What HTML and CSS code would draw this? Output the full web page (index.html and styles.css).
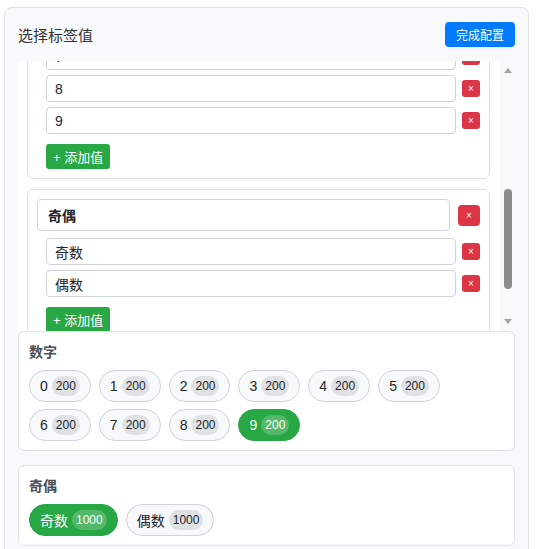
FILE: index.html
```html
<!DOCTYPE html>
<html lang="zh-CN">
<head>
    <meta charset="UTF-8">
    <meta name="viewport" content="width=device-width, initial-scale=1.0">
    <title>选择标签值</title>
    <link rel="stylesheet" href="styles.css">
</head>
<body>
    <div class="panel">
        <div class="panel-head">
            <span class="panel-title">选择标签值</span>
            <button class="btn-done">完成配置</button>
        </div>

        <!-- 标签组编辑 -->
        <div class="scroller">
            <div class="group-list" id="groupList">
                <div class="group">
                    <div class="group-head">
                        <input class="group-name" type="text" value="数字">
                        <button class="btn-del btn-del-lg">×</button>
                    </div>
                    <div class="values">
                        <div class="value-row"><input class="value-input" type="text" value="0"><button class="btn-del">×</button></div>
                        <div class="value-row"><input class="value-input" type="text" value="1"><button class="btn-del">×</button></div>
                        <div class="value-row"><input class="value-input" type="text" value="2"><button class="btn-del">×</button></div>
                        <div class="value-row"><input class="value-input" type="text" value="3"><button class="btn-del">×</button></div>
                        <div class="value-row"><input class="value-input" type="text" value="4"><button class="btn-del">×</button></div>
                        <div class="value-row"><input class="value-input" type="text" value="5"><button class="btn-del">×</button></div>
                        <div class="value-row"><input class="value-input" type="text" value="6"><button class="btn-del">×</button></div>
                        <div class="value-row"><input class="value-input" type="text" value="7"><button class="btn-del">×</button></div>
                        <div class="value-row"><input class="value-input" type="text" value="8"><button class="btn-del">×</button></div>
                        <div class="value-row"><input class="value-input" type="text" value="9"><button class="btn-del">×</button></div>
                        <button class="btn-add">+ 添加值</button>
                    </div>
                </div>
                <div class="group">
                    <div class="group-head">
                        <input class="group-name" type="text" value="奇偶">
                        <button class="btn-del btn-del-lg">×</button>
                    </div>
                    <div class="values">
                        <div class="value-row"><input class="value-input" type="text" value="奇数"><button class="btn-del">×</button></div>
                        <div class="value-row"><input class="value-input" type="text" value="偶数"><button class="btn-del">×</button></div>
                        <button class="btn-add">+ 添加值</button>
                    </div>
                </div>
                <button class="btn-add-group">+ 添加标签</button>
            </div>
            <!-- 滚动条 -->
            <div class="scrollbar">
                <span class="sb-up"></span>
                <span class="sb-thumb"></span>
                <span class="sb-down"></span>
            </div>
        </div>

        <!-- 标签值选择 -->
        <div class="tag-card">
            <div class="tag-title">数字</div>
            <div class="chips">
                <span class="chip">0 <span class="badge">200</span></span>
                <span class="chip">1 <span class="badge">200</span></span>
                <span class="chip">2 <span class="badge">200</span></span>
                <span class="chip">3 <span class="badge">200</span></span>
                <span class="chip">4 <span class="badge">200</span></span>
                <span class="chip">5 <span class="badge">200</span></span>
                <span class="chip">6 <span class="badge">200</span></span>
                <span class="chip">7 <span class="badge">200</span></span>
                <span class="chip">8 <span class="badge">200</span></span>
                <span class="chip active">9 <span class="badge">200</span></span>
            </div>
        </div>
        <div class="tag-card">
            <div class="tag-title">奇偶</div>
            <div class="chips">
                <span class="chip active">奇数 <span class="badge">1000</span></span>
                <span class="chip">偶数 <span class="badge">1000</span></span>
            </div>
        </div>
    </div>
    <script>
        var groupList = document.getElementById('groupList');
        groupList.scrollTop = 301;
    </script>
</body>
</html>
```

FILE: styles.css
```css
*{
    margin: 0;
    padding: 0;
    box-sizing: border-box;
}
body{
    font-family: "Liberation Sans", "Noto Sans CJK SC", sans-serif;
    font-size: 14px;
    color: #212529;
    background: #fff;
}
button, input{
    font-family: inherit;
}
.panel{
    margin: 7px 9px 0 4px;
    padding: 14px 13px;
    background: #f8f9fa;
    border: 1px solid #dee2e6;
    border-radius: 8px;
}
.panel-head{
    display: flex;
    align-items: center;
    justify-content: space-between;
    margin-bottom: 14px;
}
.panel-title{
    font-size: 15px;
    color: #333;
}
.btn-done{
    height: 25px;
    padding: 0 11px;
    font-size: 12px;
    color: #fff;
    background: #007bff;
    border: none;
    border-radius: 4px;
}

/* 标签组编辑区 */
.scroller{
    display: flex;
    height: 270px;
    background: #fff;
    border-radius: 4px 4px 0 0;
}
.group-list{
    flex: 1;
    min-width: 0;
    overflow: hidden;
    padding: 10px 10px 10px 9px;
}
.scrollbar{
    width: 15px;
    display: flex;
    flex-direction: column;
    align-items: center;
    background: #f9f9f9;
}
.sb-up, .sb-down{
    width: 0;
    height: 0;
    border-left: 4px solid transparent;
    border-right: 4px solid transparent;
}
.sb-up{
    margin-top: 7px;
    border-bottom: 5px solid #a3a3a3;
}
.sb-down{
    margin-top: auto;
    margin-bottom: 7px;
    border-top: 5px solid #a3a3a3;
}
.sb-thumb{
    margin-top: 116px;
    width: 8px;
    height: 100px;
    background: #8c8c8c;
    border-radius: 4px;
}
.group{
    padding: 9px;
    border: 1px solid #dee2e6;
    border-radius: 6px;
    margin-bottom: 10px;
}
.group-head{
    display: flex;
    align-items: center;
    gap: 8px;
    margin-bottom: 7px;
}
.group-name{
    flex: 1;
    min-width: 0;
    height: 32px;
    padding: 0 10px;
    font-size: 14px;
    font-weight: bold;
    color: #212529;
    border: 1px solid #ced4da;
    border-radius: 4px;
}
.values{
    padding-left: 9px;
    display: flex;
    flex-direction: column;
    align-items: flex-start;
    gap: 5px;
}
.value-row{
    display: flex;
    align-items: center;
    gap: 6px;
    width: 100%;
}
.value-input{
    flex: 1;
    min-width: 0;
    height: 27px;
    padding: 0 8px;
    font-size: 14px;
    color: #212529;
    border: 1px solid #ced4da;
    border-radius: 4px;
}
.btn-del{
    width: 18px;
    height: 17px;
    font-size: 10px;
    line-height: 17px;
    color: #fff;
    background: #dc3545;
    border: none;
    border-radius: 3px;
    text-align: center;
}
.btn-del-lg{
    width: 22px;
    height: 21px;
    line-height: 21px;
    border-radius: 4px;
}
.btn-add{
    margin-top: 5px;
    height: 25px;
    padding: 0 7px;
    font-size: 13px;
    color: #fff;
    background: #28a745;
    border: none;
    border-radius: 3px;
}
.btn-add-group{
    width: 100%;
    height: 32px;
    font-size: 13px;
    color: #007bff;
    background: #fff;
    border: 1px dashed #007bff;
    border-radius: 4px;
}

/* 标签值选择 */
.tag-card{
    padding: 10px 10px 9px;
    background: #fff;
    border: 1px solid #dee2e6;
    border-radius: 6px;
    margin-bottom: 14px;
}
.tag-title{
    font-size: 14px;
    font-weight: bold;
    line-height: 20px;
    color: #495057;
    margin-bottom: 8px;
}
.chips{
    display: flex;
    flex-wrap: wrap;
    gap: 7px 8px;
}
.chip{
    display: inline-flex;
    align-items: center;
    gap: 4px;
    height: 32px;
    padding: 0 10px;
    font-size: 14px;
    color: #212529;
    background: #f8f9fa;
    border: 1px solid #ced4da;
    border-radius: 16px;
}
.badge{
    height: 20px;
    line-height: 20px;
    padding: 0 4px;
    font-size: 12px;
    background: #e0e1e3;
    border-radius: 10px;
}
.chip.active{
    color: #fff;
    background: #28a745;
    border-color: #28a745;
}
.chip.active .badge{
    background: rgba(255, 255, 255, .2);
}
```
